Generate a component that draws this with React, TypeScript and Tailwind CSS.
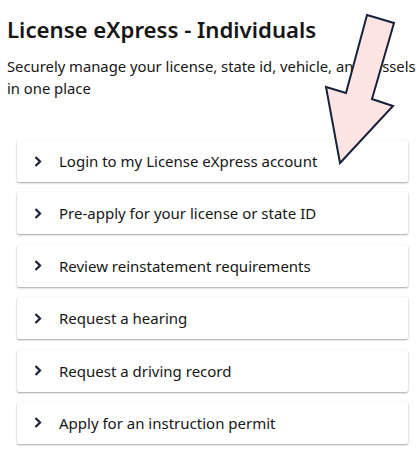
import React from "react";

const items = [
  "Login to my License eXpress account",
  "Pre-apply for your license or state ID",
  "Review reinstatement requirements",
  "Request a hearing",
  "Request a driving record",
  "Apply for an instruction permit",
];

export default function App() {
  return (
    <div
      className="relative w-[419px] h-[457px] bg-white text-[#111] overflow-hidden"
      style={{ fontFamily: '"Noto Sans", "Open Sans", sans-serif' }}
    >
      <div className="pt-[14px] pl-[7px]">
        <h1 className="text-[22.2px] leading-[32px] font-semibold text-[#161616]">
          License eXpress - Individuals
        </h1>
        <p className="mt-[9px] text-[14.8px] leading-[22px] text-[#161616] whitespace-nowrap">
          Securely manage your license, state id, vehicle, and vessels
          <br />
          in one place
        </p>
      </div>
      <div className="mt-[41px] ml-[17px] mr-[11px] flex flex-col gap-[10.4px]">
        {items.map((t) => (
          <div
            key={t}
            className="h-[42px] flex items-center bg-white rounded-[2px] shadow-[0_1px_2px_rgba(0,0,0,0.35),0_0_2px_rgba(0,0,0,0.06)]"
          >
            <svg width="8" height="11" viewBox="0 0 8 11" className="ml-[17px] mr-[17px]">
              <path d="M1.5 1 L6 5.5 L1.5 10" fill="none" stroke="#1a2238" strokeWidth="2.2" />
            </svg>
            <span className="text-[15px] leading-[20px] text-[#161616]">{t}</span>
          </div>
        ))}
      </div>
      <svg className="absolute left-0 top-0" width="419" height="200" viewBox="0 0 419 200">
        <polygon
          points="367,15 394,23 372,99 393,106 340,163 326,87 346,93"
          fill="#fee4e2"
          stroke="#16213a"
          strokeWidth="2"
          strokeLinejoin="miter"
        />
      </svg>
    </div>
  );
}
